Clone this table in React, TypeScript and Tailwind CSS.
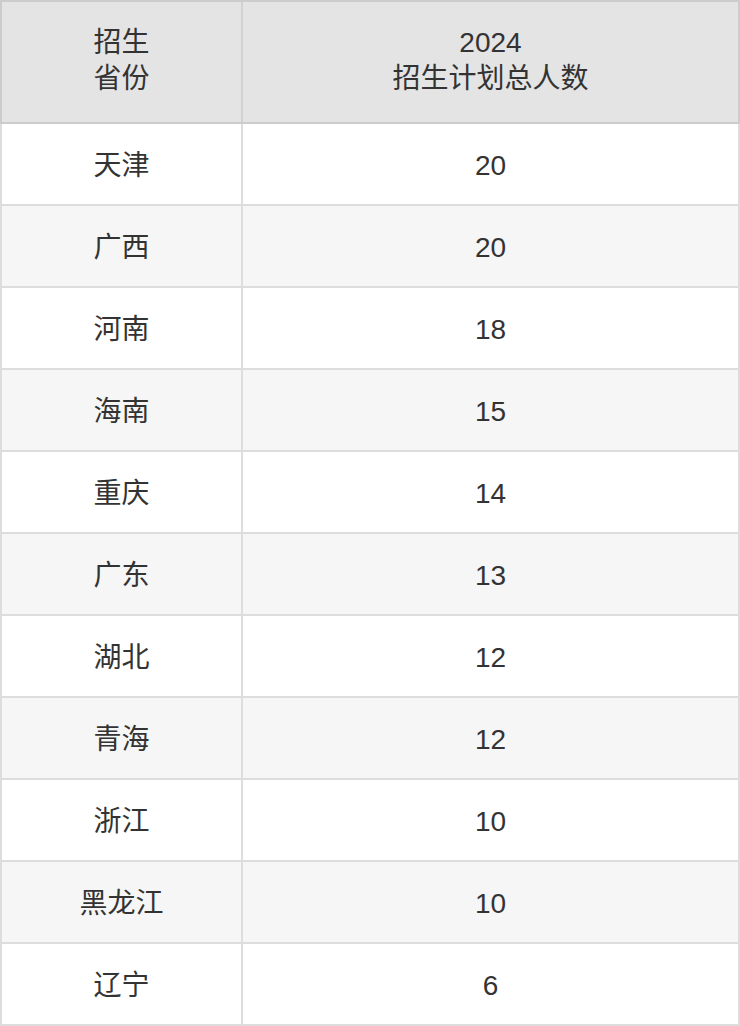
import React from 'react';

const rows: [string, number][] = [
  ['天津', 20],
  ['广西', 20],
  ['河南', 18],
  ['海南', 15],
  ['重庆', 14],
  ['广东', 13],
  ['湖北', 12],
  ['青海', 12],
  ['浙江', 10],
  ['黑龙江', 10],
  ['辽宁', 6],
];

export default function App() {
  return (
    <div
      className="w-[740px] bg-white text-[#333333] text-[28px]"
      style={{ fontFamily: '"Liberation Sans", "Noto Sans CJK SC", sans-serif' }}
    >
      {/* Header */}
      <div className="flex h-[124px] bg-[#e4e4e4] border-2 border-[#cccccc]">
        <div className="w-[241px] shrink-0 flex flex-col items-center justify-center pb-[3px] leading-[36px] border-r-2 border-[#d2d2d2]">
          <span>招生</span>
          <span>省份</span>
        </div>
        <div className="flex-1 flex flex-col items-center justify-center pb-[3px] leading-[36px]">
          <span>2024</span>
          <span>招生计划总人数</span>
        </div>
      </div>

      {/* Body */}
      {rows.map(([name, count], i) => (
        <div
          key={name}
          className={`flex h-[82px] border-x-2 border-b-2 border-[#dddddd] ${
            i % 2 === 1 ? 'bg-[#f6f6f6]' : 'bg-white'
          }`}
        >
          <div className="w-[241px] shrink-0 flex items-center justify-center pt-1 border-r-2 border-[#dddddd]">
            {name}
          </div>
          <div className="flex-1 flex items-center justify-center pt-1">{count}</div>
        </div>
      ))}
    </div>
  );
}
